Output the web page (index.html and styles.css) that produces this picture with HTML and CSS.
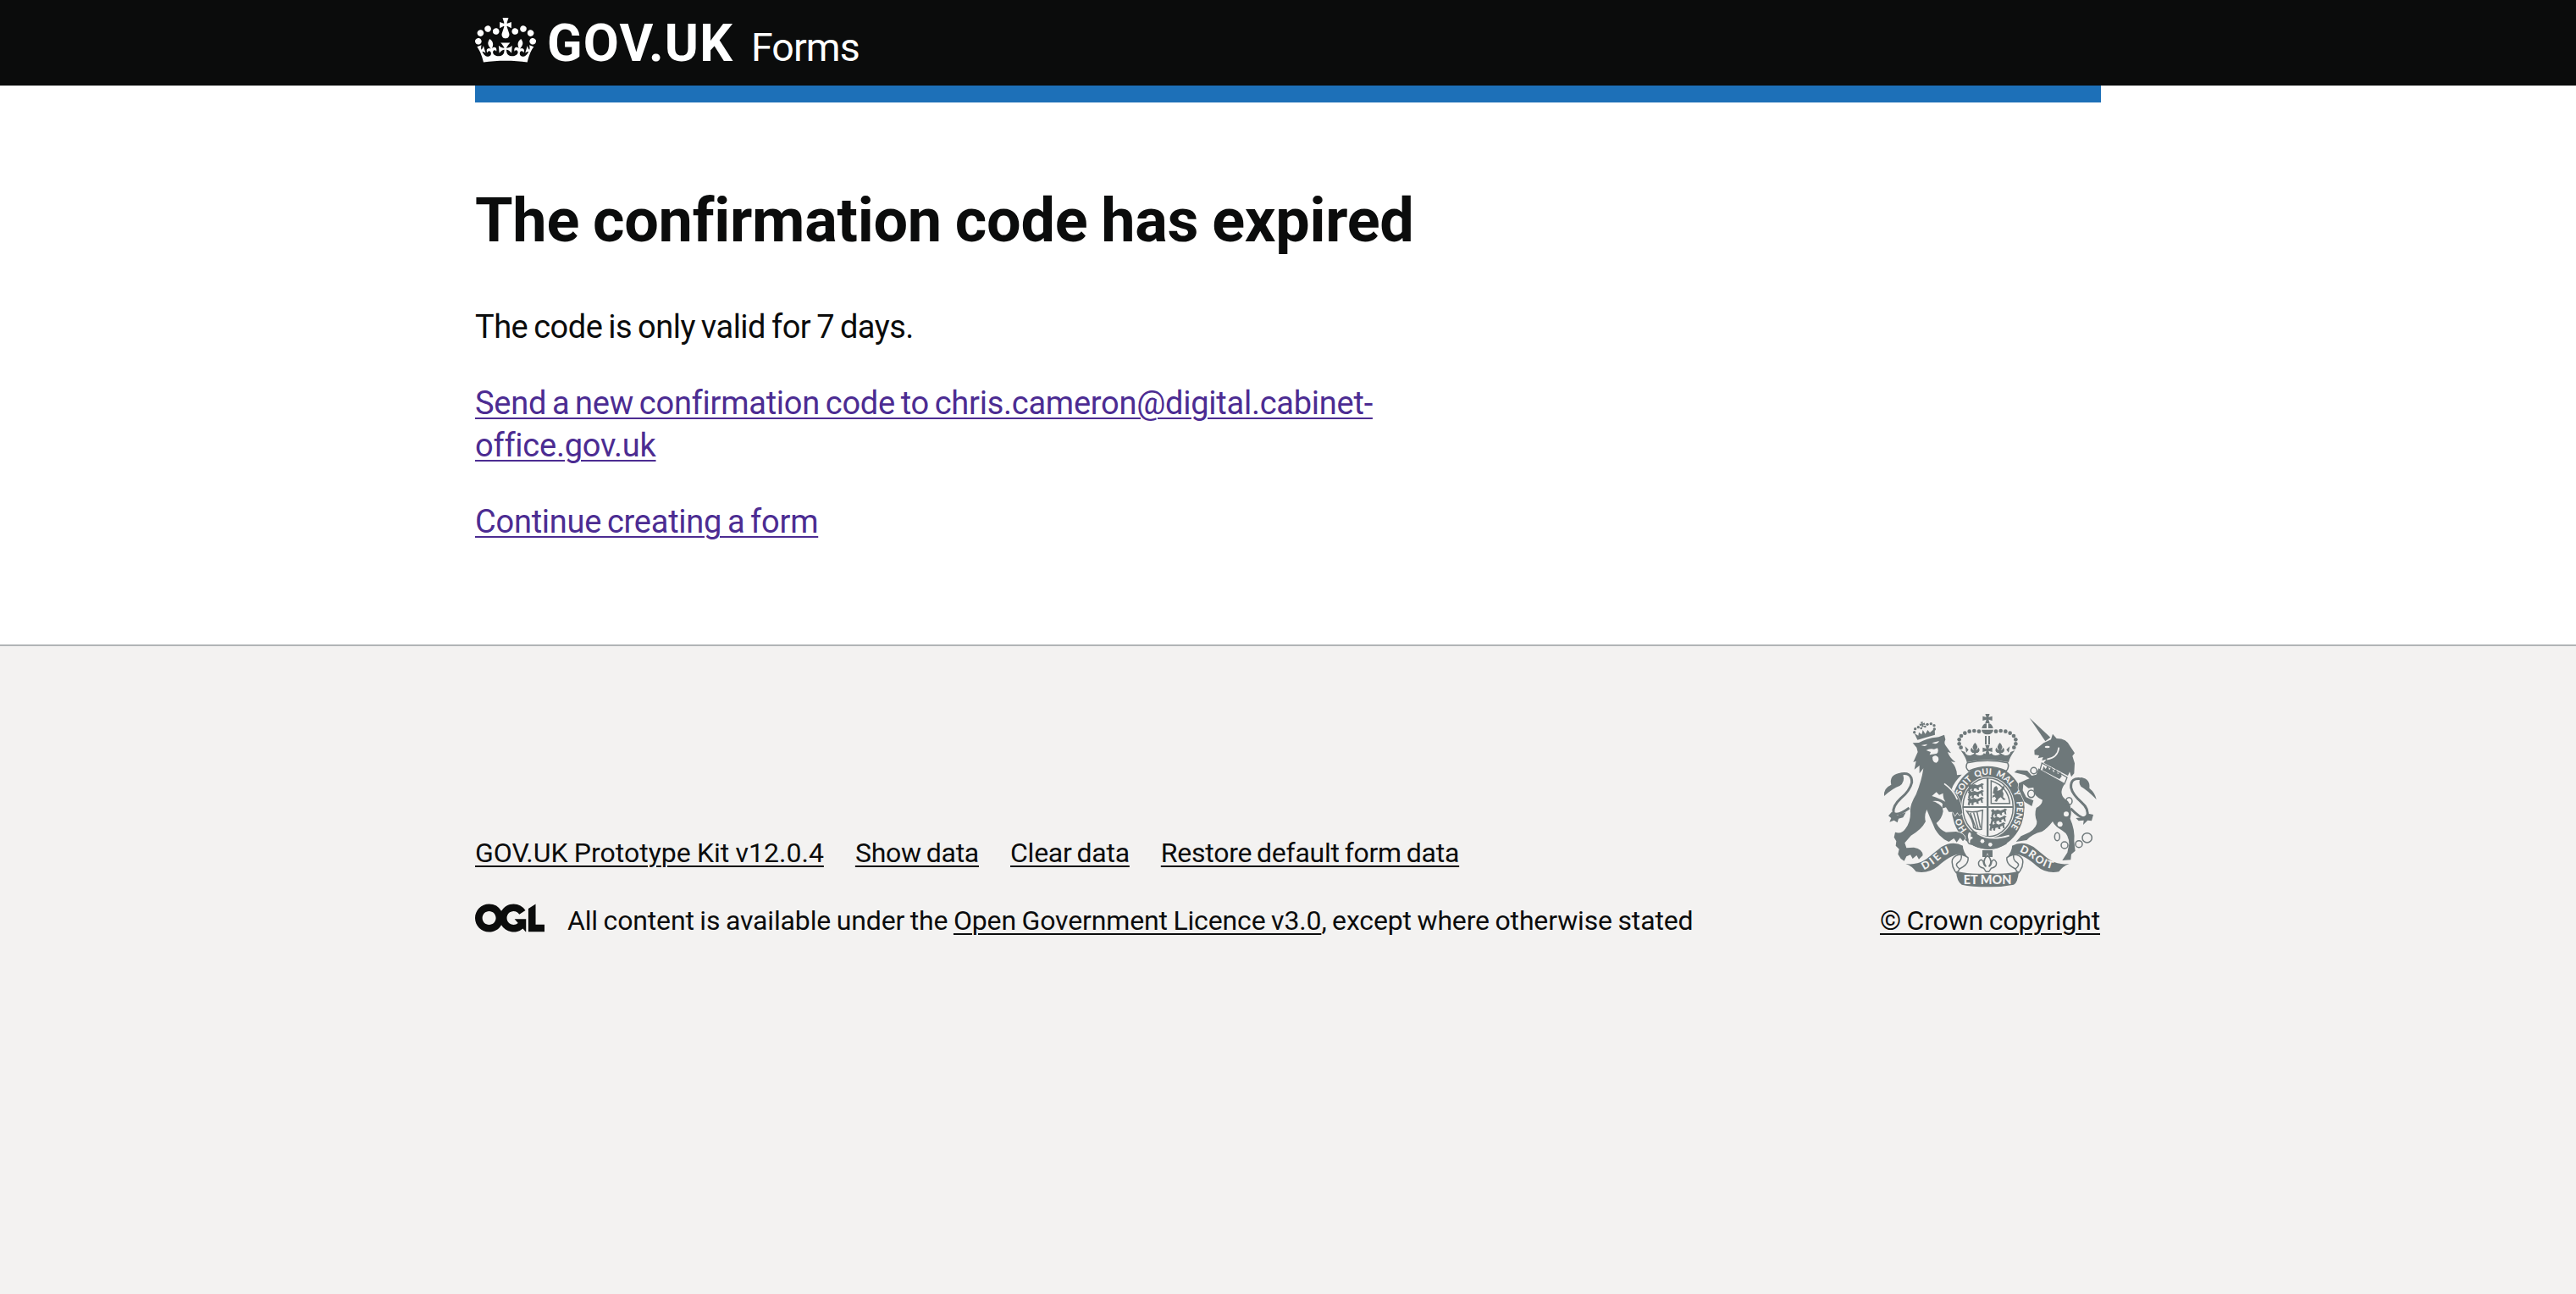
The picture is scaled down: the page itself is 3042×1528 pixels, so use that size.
FILE: index.html
```html
<!DOCTYPE html>
<html lang="en">
<head>
<meta charset="utf-8">
<title>The confirmation code has expired – GOV.UK Forms</title>
<link rel="stylesheet" href="styles.css">
</head>
<body>
<header class="header">
  <div class="header-container">
    <a class="logo" href="#">
      <svg class="logo-crown" viewBox="0 0 132 97" aria-hidden="true"><path fill="currentColor" fill-rule="evenodd" d="M25 30.2c3.5 1.5 7.7-.2 9.1-3.7 1.5-3.6-.2-7.8-3.9-9.2-3.6-1.4-7.6.3-9.1 3.9-1.4 3.5.3 7.5 3.9 9zM9 39.5c3.6 1.5 7.8-.2 9.2-3.7 1.5-3.6-.2-7.8-3.9-9.1-3.6-1.5-7.6.2-9.1 3.8-1.4 3.5.3 7.5 3.8 9zM4.4 57.2c3.5 1.5 7.7-.2 9.1-3.8 1.5-3.6-.2-7.7-3.9-9.1-3.5-1.5-7.6.3-9.1 3.8-1.4 3.5.3 7.6 3.9 9.1zm38.3-21.4c3.5 1.5 7.7-.2 9.1-3.8 1.5-3.6-.2-7.7-3.9-9.1-3.6-1.5-7.6.3-9.1 3.8-1.3 3.6.4 7.7 3.9 9.1zm64.4-5.6c-3.6 1.5-7.8-.2-9.1-3.7-1.5-3.6.2-7.8 3.8-9.2 3.6-1.4 7.7.3 9.2 3.9 1.3 3.5-.4 7.5-3.9 9zm15.9 9.3c-3.6 1.5-7.7-.2-9.1-3.7-1.5-3.6.2-7.8 3.7-9.1 3.6-1.5 7.7.2 9.2 3.8 1.5 3.5-.3 7.5-3.8 9zm4.7 17.7c-3.6 1.5-7.8-.2-9.2-3.8-1.5-3.6.2-7.7 3.9-9.1 3.6-1.5 7.7.3 9.2 3.8 1.3 3.5-.4 7.6-3.9 9.1zM89.3 35.8c-3.6 1.5-7.8-.2-9.2-3.8-1.4-3.6.2-7.7 3.9-9.1 3.6-1.5 7.7.3 9.2 3.8 1.4 3.6-.3 7.7-3.9 9.1zM69.7 17.7l8.9 4.7V9.3l-8.9 2.8c-.2-.3-.5-.6-.9-.9L72.4 0H59.6l3.5 11.2c-.3.3-.6.5-.9.9l-8.8-2.8v13.1l8.8-4.7c.3.3.6.7.9.9l-5 15.4v.1c-.2.8-.4 1.6-.4 2.4 0 4.1 3.1 7.5 7 8.1h.2c.3 0 .7.1 1 .1.4 0 .7 0 1-.1h.2c4-.6 7.1-4.1 7.1-8.1 0-.8-.1-1.7-.4-2.4V34l-5.1-15.4c.4-.2.7-.6 1-.9zM66 92.8c16.9 0 32.8 1.1 47.1 3.2 4-16.9 8.9-26.7 14-33.5l-9.6-3.4c1 4.9 1.1 7.2 0 10.2-1.5-1.4-3-4.3-4.2-8.7L108.6 76c2.8-2 5-3.2 7.5-3.3-4.4 9.4-10 11.9-13.6 11.2-4.3-.8-6.3-4.6-5.6-7.9 1-4.7 5.7-5.9 8-.5 4.3-8.7-3-11.4-7.6-8.8 7.1-7.2 7.9-13.5 2.1-21.1-8 6.1-8.1 12.3-4.5 20.8-4.7-5.4-12.1-2.5-9.5 6.2 3.4-5.2 7.9-2 7.2 3.1-.6 4.3-6.4 7.8-13.5 7.2-10.3-.9-10.9-8-11.2-13.8 2.5-.5 7.1 1.8 11 7.3L80.2 60c-4.1 4.4-8 5.3-12.3 5.4 1.4-4.4 8-11.6 8-11.6H55.5s6.4 7.2 7.9 11.6c-4.2-.1-8-1-12.3-5.4l1.4 16.4c3.9-5.5 8.5-7.7 10.9-7.3-.3 5.8-.9 12.8-11.1 13.8-7.2.6-12.9-2.9-13.5-7.2-.7-5 3.8-8.3 7.1-3.1 2.7-8.7-4.6-11.6-9.4-6.2 3.7-8.5 3.6-14.7-4.6-20.8-5.8 7.6-5 13.9 2.2 21.1-4.7-2.6-11.9.1-7.7 8.8 2.3-5.5 7.1-4.2 8.1.5.7 3.3-1.3 7.1-5.7 7.9-3.5.7-9-1.8-13.5-11.2 2.5.1 4.7 1.3 7.5 3.3l-4.7-15.4c-1.2 4.4-2.7 7.2-4.3 8.7-1.1-3-.9-5.3 0-10.2l-9.5 3.4c5 6.9 9.9 16.7 14 33.5 14.8-2.1 30.8-3.2 47.7-3.2z"/></svg>
      <span class="logo-name">GOV.UK</span>
      <span class="product-name">Forms</span>
    </a>
  </div>
</header>

<main class="main">
  <div class="column">
    <h1 class="heading">The confirmation code has expired</h1>
    <p class="body">The code is only valid for 7 days.</p>
    <p class="body"><a class="link" href="#">Send a new confirmation code to chris.cameron@digital.cabinet-<br>office.gov.uk</a></p>
    <p class="body"><a class="link" href="#">Continue creating a form</a></p>
  </div>
</main>

<footer class="footer">
  <div class="footer-container">
    <div class="footer-meta">
      <ul class="footer-links">
        <li><a class="footer-link footer-link-kit" href="#">GOV.UK Prototype Kit v12.0.4</a></li>
        <li><a class="footer-link" href="#">Show data</a></li>
        <li><a class="footer-link" href="#">Clear data</a></li>
        <li><a class="footer-link" href="#">Restore default form data</a></li>
      </ul>
      <div class="licence">
        <svg class="ogl" viewBox="0 0 483.2 195.7" role="img" aria-label="OGL"><path fill="currentColor" d="M421.5 142.8V.1l-50.7 32.3v161.1h112.4v-50.7zm-122.3-9.6A47.12 47.12 0 0 1 221 97.8c0-26 21.1-47.1 47.1-47.1 16.7 0 31.4 8.7 39.7 21.8l42.7-27.2A97.63 97.63 0 0 0 268.1 0c-36.5 0-68.3 20.1-85.1 49.7A98 98 0 0 0 97.8 0C43.9 0 0 43.9 0 97.8s43.9 97.8 97.8 97.8c36.5 0 68.3-20.1 85.1-49.7a97.76 97.76 0 0 0 149.6 25.4l19.4 22.2h3v-87.8h-80l24.3 27.5zM97.8 145c-26 0-47.1-21.1-47.1-47.1s21.1-47.1 47.1-47.1 47.1 21.1 47.1 47.1S123.8 145 97.8 145"/></svg>
        <span class="licence-text">All content is available under the <a class="footer-link" href="#">Open Government Licence v3.0</a>, except where otherwise stated</span>
      </div>
    </div>
    <div class="footer-crest">
      <svg class="crest" viewBox="42 39 756 618" aria-hidden="true">
        <defs>
          <path id="garter-line" pathLength="100" d="M413 486A102 116 0 0 1 413 254A102 116 0 0 1 413 486"/>
          <path id="dieu-line" d="M186 592Q222 574 250 546Q268 532 300 526"/>
          <path id="droit-line" d="M524 527Q556 540 584 562Q612 586 660 592"/>
          <path id="cross" d="M-8-17H8L4-4 17-8V8L4 4 8 17H-8L-4 4-17 8V-8L-4-4Z"/>
          <path id="fleur" d="M0-20Q15-6 3 7Q10 4 12-3Q21 8 9 16H3V20H-3V16H-9Q-21 8-12-3Q-10 4-3 7Q-15-6 0-20Z"/>
          <path id="passant" d="M-30-13l8-6 6 6 10-4 10 4 10-4 6-4 8 4-5 4 2 14-6-2-2-8-8 4 1 9-8-2-1-5-9 2-1 10-8-2 2-8-6 3-1 8-7-3 3-14z"/>
          <g id="ribbon-side">
            <path class="ink" d="M121 570Q162 576 196 552L248 510Q288 486 324 506Q322 522 344 552Q318 528 294 540Q270 548 236 578Q204 606 158 598Q144 578 121 570Z"/>
            <path class="line" d="M342 548Q346 572 312 588Q308 598 301 602L296 596Q282 574 287 554Q298 536 320 538Q334 542 342 548ZM318 540Q322 556 306 566Q294 574 312 588"/>
          </g>
        </defs>

        <!-- garter -->
        <ellipse class="ink" cx="413" cy="370" rx="129" ry="148"/>
        <ellipse class="paper" cx="413" cy="370" rx="95" ry="109"/>
        <ellipse class="line" cx="413" cy="370" rx="89" ry="104"/>
        <path class="ink" d="M408 266h7v208h-7zM324 366h178v6H324z"/>
        <g class="ink">
          <use href="#passant" x="371" y="305"/><use href="#passant" x="371" y="329"/><use href="#passant" x="370" y="354"/>
          <use href="#passant" x="453" y="395"/><use href="#passant" x="451" y="420"/><use href="#passant" x="447" y="444"/>
        </g>
        <path class="line" d="M424 276Q484 296 490 356H424Z"/>
        <path class="ink" d="M434 300l8-6 6 8-2 10 10-4 8-8 4-8 4 8-8 12 4 10-2 12 10 8-8 2-10-10-8 6-6 10-8-2 6-10-6-6-8 4 2-8 8-4-8-4z"/>
        <path class="line" d="M338 384Q362 390 394 380L390 448Q372 450 362 442Q360 414 338 384ZM350 390L370 444M362 389L378 446M374 387L386 442"/>
        <path class="ink" d="M340 462Q360 446 378 462Q430 492 492 474L478 500Q440 522 412 518Q376 514 350 500Z"/>
        <path class="cut" d="M374 462Q420 492 488 470"/>
        <path class="line" d="M344 456Q358 456 354 472Q364 474 360 482Q348 484 352 500Q340 500 342 484Q336 468 344 456Z"/>
        <circle class="paper" cx="393" cy="490" r="7"/><circle class="paper" cx="421" cy="502" r="7"/>
        <g class="motto">
          <text><textPath href="#garter-line" startOffset="12.5">HO</textPath></text>
          <text><textPath href="#garter-line" startOffset="31">SOIT</textPath></text>
          <text><textPath href="#garter-line" startOffset="43.3">QUI</textPath></text>
          <text><textPath href="#garter-line" startOffset="54">MAL</textPath></text>
          <text><textPath href="#garter-line" startOffset="66.5">Y</textPath></text>
          <text><textPath href="#garter-line" startOffset="72">PENSE</textPath></text>
        </g>

        <!-- royal crown -->
        <path class="line" d="M340 212Q411 198 482 212Q490 226 478 241Q411 212 344 241Q330 228 340 212Z"/>
        <path class="ink" d="M316 168l15 6q4 14 20 12q12-4 15-8q4 8 18 8q12 0 14-8l8 4h12l8-4q2 8 14 8q14 0 18-8q3 4 15 8q16 2 20-12l15-6q-18 24-22 42q-74-16-148 0q-4-18-22-42z"/>
        <g class="ink">
          <use href="#cross" x="411" y="55"/><use href="#cross" x="411" y="166"/>
          <use href="#fleur" x="367" y="161"/><use href="#fleur" x="455" y="161"/>
          <path d="M391 90Q394 73 408 73V90ZM431 90Q428 73 414 73V90ZM390 95H432Q430 111 411 112Q392 111 390 95ZM402 117h6v30h-6zM414 117h6v30h-6zM332 154l12 12-8 10zM490 154l-12 12 8 10z"/>
          <circle cx="381" cy="101" r="7"/><circle cx="364" cy="99" r="7"/><circle cx="347" cy="101" r="7"/><circle cx="331" cy="107" r="7"/><circle cx="318" cy="117" r="7"/><circle cx="311" cy="130" r="7"/><circle cx="311" cy="145" r="7"/><circle cx="317" cy="158" r="7"/>
          <circle cx="441" cy="101" r="7"/><circle cx="458" cy="99" r="7"/><circle cx="475" cy="101" r="7"/><circle cx="491" cy="107" r="7"/><circle cx="504" cy="117" r="7"/><circle cx="511" cy="130" r="7"/><circle cx="511" cy="145" r="7"/><circle cx="505" cy="158" r="7"/>
        </g>

        <!-- lion -->
        <g class="ink">
          <path d="M152 108l14 8 2-12 10 8 4-16 9 14 8-14 8 9 17-14 1 22-62 18z"/>
          <circle cx="152" cy="104" r="5"/><circle cx="155" cy="92" r="5"/><circle cx="166" cy="86" r="5"/><circle cx="176" cy="90" r="4"/><circle cx="190" cy="84" r="4"/><circle cx="198" cy="76" r="5"/><circle cx="211" cy="74" r="5"/><circle cx="222" cy="80" r="5"/><circle cx="223" cy="93" r="5"/>
          <use href="#cross" transform="translate(180 76) rotate(-14) scale(.55)"/>
          <path class="edge" d="M146 142L168 141Q196 124 238 121L258 113L262 130Q256 142 262 150L282 178L270 174Q276 194 298 210L282 208Q302 226 303 256L320 254Q292 280 284 306L300 322Q316 346 320 378L322 390L312 398L304 388L296 400L288 386L274 386L264 370L250 374L252 358Q240 344 216 348Q252 358 254 384Q250 410 230 426Q242 450 264 458L300 456Q330 462 333 480L324 490L314 478L302 494L292 480L274 492L258 484Q228 462 218 430Q206 404 196 378Q186 400 192 420Q178 448 140 470L118 496L124 514L150 512Q182 518 182 540L168 554L160 540L146 552L138 538L124 544L116 560L104 552L94 536L98 518L86 506L88 490L80 476L84 458Q106 466 120 446Q138 424 138 390Q134 364 158 324Q178 276 184 232L170 250L170 222L152 236L158 206L148 210L164 174L160 158Z"/>
          <path d="M45 330Q42 302 70 290Q62 256 98 249L112 254Q120 280 100 294Q76 302 45 330Z"/>
          <path d="M60 400l12-14 20 12 30-10-10 18-16 4-4 14-12-8-16 6 6-14z"/>
        </g>
        <path class="tail" d="M96 254Q144 240 143 282Q136 312 104 338Q74 366 78 390Q94 402 134 372"/>
        <path class="paper" d="M176 150L198 146Q192 156 184 152ZM214 142L240 135Q234 148 222 144ZM194 168Q206 160 222 164L234 160Q240 174 230 180L206 184L210 174ZM216 192Q226 182 236 192Q242 206 230 212Q216 212 216 192ZM214 330L230 316 240 326 254 320Q252 336 262 350Q236 336 214 330Z"/>
        <path class="cut" d="M258 286Q292 310 304 342"/>

        <!-- unicorn -->
        <g class="ink">
          <path d="M560 53L634 122L616 136Z"/>
          <path d="M577 168L610 142L636 130L642 110L656 126Q692 126 704 154L720 178L712 188L720 214L718 250L708 262L702 244L696 258L610 212L620 200L604 204L608 192L590 196L594 186L578 184Z"/>
          <path class="edge" d="M592 232L684 288Q658 326 696 348Q714 372 704 410Q722 450 718 490L722 524L708 536L706 556L676 558L694 530L700 500Q700 466 676 452Q650 438 642 420Q622 446 604 456Q570 464 550 486L512 492L530 472L560 458Q588 440 586 420Q576 396 584 372Q604 362 606 344Q572 330 574 300L556 302L538 288L536 310L548 334L574 346L568 366L542 350L520 302L522 284L548 272L560 268L544 256L506 246L516 238L552 240L568 258L584 254Z"/>
          <path d="M797 342Q792 318 772 302Q776 270 744 264Q730 278 742 296Q766 310 797 342ZM786 396l-18-4-20 14-24 2 10 10 18-2-2 16 16-16 14 2z"/>
        </g>
        <path class="collar" d="M604 213L693 264L684 287L597 238Z"/>
        <path class="ink" d="M606 238l4-14 7 10 8-12 5 16 8-10 7 18 9-12 6 18 10-6 4 14-8 10-62-32z"/>
        <path class="tail" d="M746 270Q704 262 707 300Q712 324 744 352Q772 376 764 404Q748 418 706 374"/>
        <path class="cut" d="M664 158Q660 194 622 200"/>
        <ellipse class="paper" cx="623" cy="156" rx="9" ry="4"/>
        <circle class="paper" cx="690" cy="394" r="9"/><circle class="paper" cx="668" cy="430" r="9"/>
        <g class="line clear">
          <ellipse cx="575" cy="240" rx="11" ry="11"/><ellipse cx="566" cy="322" rx="12" ry="13"/><ellipse cx="700" cy="348" rx="11" ry="13"/>
          <ellipse cx="658" cy="474" rx="9" ry="14"/><circle cx="684" cy="504" r="12"/><circle cx="735" cy="500" r="12"/><circle cx="764" cy="478" r="17"/>
        </g>

        <!-- motto ribbon -->
        <use href="#ribbon-side"/>
        <use href="#ribbon-side" transform="matrix(-1 0 0 1 822 0)"/>
        <path class="ink" d="M300 596Q350 608 411 604Q476 608 522 596Q518 638 504 644Q460 653 411 652Q356 652 320 644Q302 632 300 596ZM393 522H429V546H417L411 532 405 546H393Z"/>
        <path class="line" d="M411 540Q432 560 416 580Q424 576 426 562Q434 548 442 564Q446 582 424 586L416 598H406L398 586Q376 582 380 564Q388 548 396 562Q398 576 406 580Q390 560 411 540Z"/>
        <g class="motto">
          <text class="motto-side"><textPath href="#dieu-line" textLength="112">DIEU</textPath></text>
          <text class="motto-side"><textPath href="#droit-line" textLength="132">DROIT</textPath></text>
          <text class="motto-main" x="326" y="642" textLength="170" lengthAdjust="spacingAndGlyphs">ET MON</text>
        </g>
      </svg>
      <a class="footer-link" href="#">© Crown copyright</a>
    </div>
  </div>
</footer>
</body>
</html>
```
FILE: styles.css
```css
* { box-sizing: border-box; }

body {
  margin: 0;
  min-height: 1528px;
  display: flex;
  flex-direction: column;
  font-family: Roboto, "Liberation Sans", sans-serif;
  color: #0b0c0c;
  background: #fff;
}

.header {
  height: 101px;
  background: #0b0c0c;
}

.header-container {
  width: 1920px;
  height: 121px;
  margin: 0 auto;
  border-bottom: 20px solid #1d70b8;
}

.logo {
  display: flex;
  align-items: flex-start;
  color: #fff;
  text-decoration: none;
}

.logo-crown {
  width: 72px;
  height: 53px;
  margin-top: 21px;
}

.logo-name {
  width: 222px;
  margin: 16px 0 0 13px;
  font-size: 61px;
  line-height: 70px;
  font-weight: 700;
  letter-spacing: 1.2px;
}

.product-name {
  margin: 21px 0 0 19px;
  font-size: 46.5px;
  line-height: 70px;
  letter-spacing: -0.9px;
}

.main {
  width: 1920px;
  margin: 0 auto;
  padding: 120px 0 80px;
}

.column { width: 1260px; }

.heading {
  margin: 0 0 60px;
  font-size: 72px;
  line-height: 80px;
  font-weight: 700;
  white-space: nowrap;
  letter-spacing: -0.25px;
  word-spacing: -1.8px;
}

.body {
  margin: 0 0 40px;
  font-size: 38px;
  line-height: 50px;
  letter-spacing: -0.5px;
  word-spacing: -2px;
}

.link {
  color: #4c2c92;
  letter-spacing: -0.25px;
  word-spacing: -2.4px;
  text-decoration-thickness: 2px;
  text-underline-offset: 4px;
}

.footer {
  flex: 1;
  padding-top: 80px;
  border-top: 2px solid #b1b4b6;
  background: #f3f2f1;
  font-size: 32px;
  line-height: 40px;
  letter-spacing: -0.15px;
  word-spacing: -1.2px;
}

.footer-container {
  width: 1920px;
  margin: 0 auto;
  display: flex;
  justify-content: space-between;
  align-items: flex-end;
}

.footer-links {
  display: flex;
  gap: 37px;
  margin: 0 0 40px;
  padding: 0;
  list-style: none;
  letter-spacing: -0.25px;
  word-spacing: -1.8px;
}

.footer-link {
  color: inherit;
  text-decoration-thickness: 2px;
  text-underline-offset: 4px;
}

.footer-link-kit {
  letter-spacing: 0;
  word-spacing: -0.7px;
}

.licence {
  display: flex;
  gap: 27px;
}

.licence-text { white-space: pre; }

.ogl {
  width: 82px;
  height: 34px;
}

.footer-crest {
  width: 262px;
  height: 264px;
  display: flex;
  flex-direction: column;
  align-items: center;
  justify-content: space-between;
  white-space: nowrap;
}

.crest {
  width: 252px;
  height: 206px;
}

.ink { fill: #6e787a; }
.paper { fill: #f3f2f1; }
.line { fill: #f3f2f1; stroke: #6e787a; stroke-width: 4.5; }
.clear { fill: none; }
.edge { stroke: #f3f2f1; stroke-width: 4; paint-order: stroke; }
.cut { fill: none; stroke: #f3f2f1; stroke-width: 5; }
.tail { fill: none; stroke: #6e787a; stroke-width: 9; }
.collar { fill: #f3f2f1; stroke: #6e787a; stroke-width: 4; }
.motto { fill: #f3f2f1; font: 900 31px Lato, sans-serif; letter-spacing: 0; word-spacing: 0; }
.motto-side { font-size: 37px; }
.motto-main { font-size: 45px; }
```
